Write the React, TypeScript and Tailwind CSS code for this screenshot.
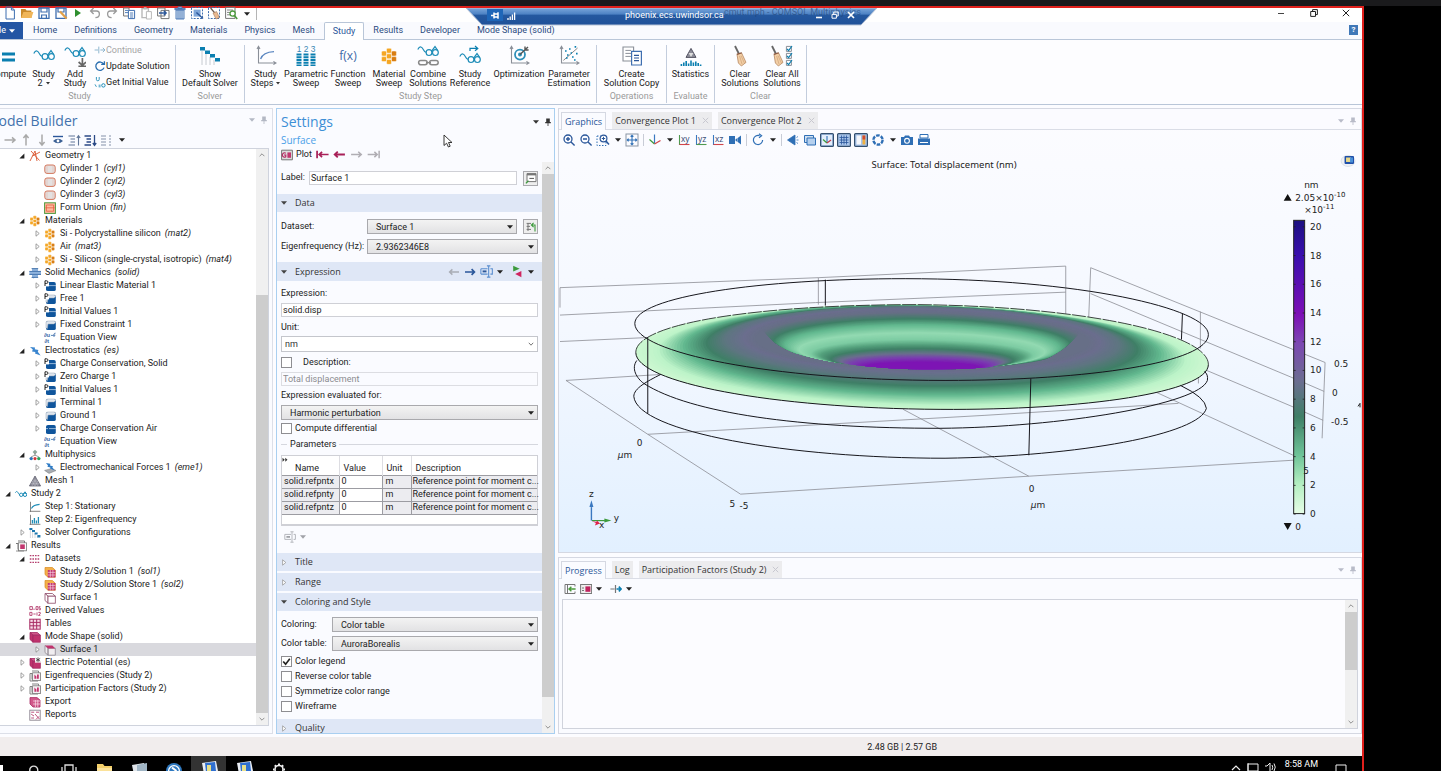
import React, { ReactNode } from "react";

/* ---------- shared bits ---------- */

function Svg({ children, size = 12, vb = 12 }: { children: ReactNode; size?: number; vb?: number }) {
  return (
    <svg width={size} height={size} viewBox={`0 0 ${vb} ${vb}`} fill="none" className="block shrink-0" aria-hidden="true">
      {children}
    </svg>
  );
}

function Caret({ color = "#222" }: { color?: string }) {
  return (
    <svg width="6" height="4" viewBox="0 0 6 4" className="block shrink-0" aria-hidden="true">
      <path d="M0 0.3H6L3 3.7Z" fill={color} />
    </svg>
  );
}

function Pin({ color }: { color: string }) {
  return (
    <Svg size={8} vb={8}>
      <path d="M2.2 0.5H5.8V4H6.8V5.2H1.2V4H2.2ZM3.6 5.2H4.4V8H3.6Z" fill={color} />
    </Svg>
  );
}

function PanelTools({ color }: { color: string }) {
  return (
    <div className="flex items-center gap-1">
      <button aria-label="Panel menu" className="p-px"><Caret color={color} /></button>
      <button aria-label="Pin panel"><Pin color={color} /></button>
    </div>
  );
}

/* ---------- tree icons ---------- */

const hexDots = (s: number) => (
  <g transform={`scale(${s})`}>
    {[[4.2, 0.8], [1, 2.6], [7.4, 2.6], [4.2, 4.4], [1, 6.2], [7.4, 6.2], [4.2, 8]].map(([x, y], i) => (
      <rect key={i} x={x} y={y} width="3.2" height="3.2" rx="0.8" fill={i % 3 === 2 ? "#d97d12" : "#f5a623"} stroke="#fff" strokeWidth="0.3" />
    ))}
  </g>
);

const domain = (top: string, p: boolean, split: boolean) => (
  <>
    <path d="M2 3.5Q2 2 4 2H10Q11.8 2 11.8 4V9.5Q11.8 11 10 11H4Q2 11 2 9.5Z" fill="#0f559c" />
    {top !== "#0f559c" && <path d="M2 3.5Q2 2 4 2H10Q11.6 2 11.6 3.6L10 5H4L3.4 9.5L2 9Z" fill={top} stroke="#9aa7b5" strokeWidth="0.5" />}
    {split && <path d="M2 5.6H4M5 5.6H12" stroke="#cfe0f2" strokeWidth="0.7" />}
    {p && <><rect x="0" y="0" width="5" height="6.4" fill="#fff" /><path d="M1 6V0.8H2.6Q4 0.9 4 2.1Q4 3.4 2.6 3.4H1" stroke="#222" strokeWidth="1" /></>}
  </>
);

const glasses = (c = "#1f8db8") => (
  <g stroke={c} strokeWidth="1">
    <path d="M0.4 4.6C1.6 2.6 2.6 3.6 3.4 5.4Q4 6.6 4.8 6.6" />
    <circle cx="6.2" cy="6.8" r="1.7" />
    <circle cx="10" cy="6.8" r="1.7" />
    <path d="M8 6.2L10 3.8L11.6 6" />
  </g>
);

const plotGroup = (
  <>
    <path d="M3 1H9.5V3M1 3.5H3V9.5H9" stroke="#777" strokeWidth="1" />
    <rect x="3.5" y="2.8" width="8" height="8" fill="#fff" stroke="#777" strokeWidth="0.8" />
    <rect x="5.2" y="4.4" width="4.6" height="4.6" fill="#c2376f" />
    <path d="M1 11H9" stroke="#777" strokeWidth="0.8" />
  </>
);

const cube = (front: string, top: string, line = "#a12a62") => (
  <>
    <path d="M1 1.5H8.4L11.3 4.2H4Z" fill={top} stroke={line} strokeWidth="0.8" />
    <path d="M1 1.5L4 4.2V11.2L1 8.5Z" fill={front} stroke={line} strokeWidth="0.8" />
    <rect x="4" y="4.2" width="7.3" height="7" fill={front} stroke={line} strokeWidth="0.8" />
  </>
);

const treeIcons: Record<string, ReactNode> = {
  geometry: <path d="M1 11L6 1L8 11M2 1L10.5 10.5M3.4 6L11 2" stroke="#d9532c" strokeWidth="0.9" />,
  cylinder: (
    <>
      <rect x="0.8" y="2" width="10.4" height="8.4" rx="2.2" fill="#e4e1e1" stroke="#d0684b" strokeWidth="0.9" />
      <path d="M3 2.2V10.2M9 2.2V10.2" stroke="#e6b2a2" strokeWidth="0.5" />
    </>
  ),
  union: (
    <>
      <rect x="0.6" y="0.8" width="10.8" height="10.6" fill="#ffb9a0" stroke="#4e9a3c" strokeWidth="1" />
      <path d="M2.4 3H9.6V9.2H2.4ZM1.4 5.8H10.6" stroke="#e2613f" strokeWidth="0.8" />
    </>
  ),
  materials: hexDots(1),
  solid: (
    <>
      <path d="M3 1.4H9V4H12V8H9V10.6H6L4.6 11.4L3 10.6V8H0.4V4H3Z" fill="#8fb4de" />
      <path d="M0.4 4.4H12M0.4 7.4H12M2.6 1.6H9.2M2.6 10.4H9.2" stroke="#3f6fa8" strokeWidth="0.9" />
    </>
  ),
  domP: domain("#0f559c", true, true),
  bndP: domain("#dfe6ee", true, false),
  bnd: domain("#dfe6ee", false, false),
  dom: domain("#0f559c", false, true),
  equation: (
    <>
      <g fill="#3465a4" fontFamily="'Liberation Sans', sans-serif" fontSize="5.4" fontWeight="700">
        <text x="0" y="5">∂u</text>
        <text x="0.6" y="11">∂t</text>
      </g>
      <path d="M7 3.4H9M10 5V2.2Q10.2 1 11.6 1.2M9 3.2H11.4" stroke="#3465a4" strokeWidth="0.8" />
    </>
  ),
  bolt: <path d="M1 2L6 2.6L5.8 4.2L9.4 5L8.8 6.8L11.6 10.6L6 8.6L6.4 7L3 6.4L3.8 4.6Z" fill="#3b86cf" />,
  multi: (
    <>
      <path d="M6 0.8L8.4 3L6 5.4L3.6 3Z" fill="#8fa79b" />
      <path d="M6 4V7M2 8L6 6L10 8" stroke="#888" strokeWidth="0.8" />
      <circle cx="2.2" cy="9.6" r="1.7" fill="#2f74b8" />
      <circle cx="6" cy="9.6" r="1.6" fill="#d33a3a" />
      <circle cx="9.8" cy="9.6" r="1.7" fill="#2aa05a" />
    </>
  ),
  emech: (
    <>
      <path d="M0.6 8.4L8 6.4L12 8.6L5 11.4Z" fill="#a9adb3" stroke="#777" strokeWidth="0.5" />
      <path d="M2 1L6.4 1.8L6 3.4L9 4.2L8.4 5.4L10.6 8.4L6 6.6L6.4 5.4L3.4 4.8L4 3.4Z" fill="#2f7cc6" />
    </>
  ),
  mesh: (
    <>
      <path d="M6 1L11.6 11H0.4Z" fill="#8c8c98" stroke="#555564" strokeWidth="0.7" />
      <path d="M3.2 6H8.8M4.6 3.6L9 11M7.4 3.6L3 11M1.8 8.6H10.2M6 11L3.2 6M6 11L8.8 6" stroke="#c9c9d2" strokeWidth="0.4" />
    </>
  ),
  study: glasses(),
  stationary: (
    <>
      <path d="M1.5 0.8V11M0.6 10.3H11.4" stroke="#777" strokeWidth="0.9" />
      <path d="M2.4 7.4Q4.4 3.8 10.6 3.4" stroke="#1f8db8" strokeWidth="1.1" />
    </>
  ),
  eigen: (
    <>
      <path d="M1.5 0.8V11M0.6 10.3H11.4" stroke="#777" strokeWidth="0.9" />
      <path d="M3.4 9.6V6M5.4 9.6V4M7.4 9.6V6.4M9.4 9.6V3" stroke="#1f8db8" strokeWidth="1.3" />
    </>
  ),
  solver: (
    <>
      <path d="M1.4 3V11M3.6 5V11M6 7V11M8.4 9V11" stroke="#c9cdd4" strokeWidth="0.8" />
      <path d="M0.4 1H3.4V3H0.4ZM3 3H6V5H3ZM5.6 5.4H8.6V7.4H5.6ZM8.4 8H11.4V10.6H8.4Z" fill="#1c77ae" />
    </>
  ),
  results: plotGroup,
  plots: (
    <>
      <path d="M3 1H9.5V3M1 3.5H3V9.5M1 3.5V11H9" stroke="#777" strokeWidth="0.9" />
      <rect x="3.6" y="2.8" width="7.8" height="7.8" fill="#f4f0f3" stroke="#777" strokeWidth="0.8" />
      <path d="M5.4 8.8V4.6L7.4 6.6V8.8ZM8 4.4H9.8V8.8H8Z" fill="#c2376f" />
    </>
  ),
  datasets: <path d="M0.8 2.6H10.8M0.8 6H10.8M0.8 9.4H10.8" stroke="#b5406f" strokeWidth="1.4" strokeDasharray="1.6 1" />,
  solution: (
    <>
      <path d="M1 1.5H8.4L11.3 4.2V11.2H4L1 8.5Z" fill="#f3b04a" stroke="#d98a20" strokeWidth="0.7" />
      <rect x="3.8" y="4" width="7.6" height="7.4" fill="#c2376f" />
      <path d="M6.3 4V11.4M8.9 4V11.4M3.8 6.4H11.4M3.8 9H11.4" stroke="#fbe3ec" strokeWidth="0.6" />
    </>
  ),
  surfset: cube("#fff", "#fff", "#8e4a68"),
  derived: (
    <path d="M0.8 1.6H3.4V4.6H0.8ZM5 3.6V5M7 1.6H9V4.6H7ZM11.4 1.6H10.2V3.2H11.4V4.8H10M0.8 7.4H3V10.4H0.8ZM4.4 9H6.6M8 7.4V10.6M9.4 7.4H11.2V9L9.4 10.4H11.4" stroke="#b5406f" strokeWidth="0.9" />
  ),
  tables: (
    <>
      <rect x="0.8" y="1.2" width="10.4" height="10" fill="#f7dbe6" stroke="#a82c64" strokeWidth="1" />
      <path d="M4.3 1.2V11.2M7.7 1.2V11.2M0.8 4.4H11.2M0.8 7.8H11.2" stroke="#a82c64" strokeWidth="1" />
    </>
  ),
  mode: cube("#c0336d", "#d1588a"),
  surface: (
    <>
      <path d="M1 1.5L4 4.2V11.2L1 8.5ZM4 4.2H11.3V11.2H4Z" fill="#f0edf0" stroke="#8d8790" strokeWidth="0.8" />
      <path d="M1 1.5H8.4L11.3 4.4H4Z" fill="#c0336d" />
    </>
  ),
  potential: (
    <>
      {cube("#c0336d", "#d1588a")}
      <rect x="6" y="0" width="6" height="5.6" fill="#fff" />
      <path d="M9 0.4V5.2M6.8 1.4L11.2 4.2M11.2 1.4L6.8 4.2" stroke="#333" strokeWidth="0.8" />
    </>
  ),
  export: (
    <>
      <path d="M1 1.6H8L11 4V11H4L1 8Z" fill="#d1588a" stroke="#a82c64" strokeWidth="0.8" />
      <path d="M4 5H11M4 8H11M6.4 4V11M8.8 4V11" stroke="#fbe3ec" strokeWidth="0.7" />
    </>
  ),
  reports: (
    <>
      <rect x="0.8" y="1.2" width="10.4" height="10" fill="#fff" stroke="#8b8490" strokeWidth="0.9" />
      <path d="M2.2 3.2H5.2M7 3.2H10M2.2 5.2L5 7M6 5L10.4 10M7 10.4L10 7.4M2.2 9H5" stroke="#b5406f" strokeWidth="0.9" />
    </>
  ),
};

type Node = { l: 0 | 1 | 2; a?: "open" | "closed"; i: string; t: string; tag?: string; sel?: boolean };

const nodes: Node[] = [
  { l: 1, a: "open", i: "geometry", t: "Geometry 1" },
  { l: 2, i: "cylinder", t: "Cylinder 1", tag: "(cyl1)" },
  { l: 2, i: "cylinder", t: "Cylinder 2", tag: "(cyl2)" },
  { l: 2, i: "cylinder", t: "Cylinder 3", tag: "(cyl3)" },
  { l: 2, i: "union", t: "Form Union", tag: "(fin)" },
  { l: 1, a: "open", i: "materials", t: "Materials" },
  { l: 2, a: "closed", i: "materials", t: "Si - Polycrystalline silicon", tag: "(mat2)" },
  { l: 2, a: "closed", i: "materials", t: "Air", tag: "(mat3)" },
  { l: 2, a: "closed", i: "materials", t: "Si - Silicon (single-crystal, isotropic)", tag: "(mat4)" },
  { l: 1, a: "open", i: "solid", t: "Solid Mechanics", tag: "(solid)" },
  { l: 2, a: "closed", i: "domP", t: "Linear Elastic Material 1" },
  { l: 2, a: "closed", i: "bndP", t: "Free 1" },
  { l: 2, a: "closed", i: "domP", t: "Initial Values 1" },
  { l: 2, a: "closed", i: "bnd", t: "Fixed Constraint 1" },
  { l: 2, i: "equation", t: "Equation View" },
  { l: 1, a: "open", i: "bolt", t: "Electrostatics", tag: "(es)" },
  { l: 2, a: "closed", i: "domP", t: "Charge Conservation, Solid" },
  { l: 2, a: "closed", i: "bndP", t: "Zero Charge 1" },
  { l: 2, a: "closed", i: "domP", t: "Initial Values 1" },
  { l: 2, a: "closed", i: "bnd", t: "Terminal 1" },
  { l: 2, a: "closed", i: "bnd", t: "Ground 1" },
  { l: 2, a: "closed", i: "dom", t: "Charge Conservation Air" },
  { l: 2, i: "equation", t: "Equation View" },
  { l: 1, a: "open", i: "multi", t: "Multiphysics" },
  { l: 2, a: "closed", i: "emech", t: "Electromechanical Forces 1", tag: "(eme1)" },
  { l: 1, i: "mesh", t: "Mesh 1" },
  { l: 0, a: "open", i: "study", t: "Study 2" },
  { l: 1, i: "stationary", t: "Step 1: Stationary" },
  { l: 1, i: "eigen", t: "Step 2: Eigenfrequency" },
  { l: 1, a: "closed", i: "solver", t: "Solver Configurations" },
  { l: 0, a: "open", i: "results", t: "Results" },
  { l: 1, a: "open", i: "datasets", t: "Datasets" },
  { l: 2, i: "solution", t: "Study 2/Solution 1", tag: "(sol1)" },
  { l: 2, i: "solution", t: "Study 2/Solution Store 1", tag: "(sol2)" },
  { l: 2, i: "surfset", t: "Surface 1" },
  { l: 1, i: "derived", t: "Derived Values" },
  { l: 1, i: "tables", t: "Tables" },
  { l: 1, a: "open", i: "mode", t: "Mode Shape (solid)" },
  { l: 2, a: "closed", i: "surface", t: "Surface 1", sel: true },
  { l: 1, a: "closed", i: "potential", t: "Electric Potential (es)" },
  { l: 1, a: "closed", i: "plots", t: "Eigenfrequencies (Study 2)" },
  { l: 1, a: "closed", i: "plots", t: "Participation Factors (Study 2)" },
  { l: 1, i: "export", t: "Export" },
  { l: 1, i: "reports", t: "Reports" },
];

const indent = ["pl-[2px]", "pl-[16px]", "pl-[31px]"];

function TreeArrow({ a }: { a?: "open" | "closed" }) {
  return (
    <span className="flex w-3 shrink-0 justify-center">
      {a === "open" && <Svg size={6} vb={6}><path d="M5.4 0.6V5.4H0.4Z" fill="#222" /></Svg>}
      {a === "closed" && <Svg size={7} vb={7}><path d="M2 0.8L5.2 3.5L2 6.2Z" stroke="#8a8a8a" strokeWidth="0.8" fill="#fff" /></Svg>}
    </span>
  );
}

function ScrollBar({ thumb }: { thumb: ReactNode }) {
  return (
    <div className="flex w-3 shrink-0 flex-col bg-[#f0f0f0]" aria-hidden="true">
      <span className="flex h-3 items-center justify-center"><Svg size={6} vb={6}><path d="M0.6 4.2L3 1.8L5.4 4.2" stroke="#909090" /></Svg></span>
      <div className="flex min-h-0 flex-1 flex-col">{thumb}</div>
      <span className="flex h-3 items-center justify-center"><Svg size={6} vb={6}><path d="M0.6 1.8L3 4.2L5.4 1.8" stroke="#909090" /></Svg></span>
    </div>
  );
}

/* ---------- title bar ---------- */

const quick: [string, ReactNode][] = [
  ["New", <path d="M3 1H8.4L11.4 4V13H3ZM8.4 1V4H11.4" stroke="#3f6fb0" />],
  ["Open", <><path d="M1 3H5.4L6.6 4.4H11.4V12H1Z" fill="#c98a2c" /><path d="M3.4 6H13.4L11.4 12H1Z" fill="#f0b65a" /></>],
  ["Save", <><path d="M2 2H12V12.4H2Z" stroke="#3f6fb0" strokeWidth="1.3" /><path d="M4 2V6H10V2M4.6 12.4V9H9.4V12.4" stroke="#3f6fb0" strokeWidth="1.2" /></>],
  ["Save as", <><path d="M2 2H12V12.4H2Z" stroke="#3f6fb0" strokeWidth="1.3" /><path d="M4 2V6H10V2" stroke="#3f6fb0" strokeWidth="1.2" /><path d="M6 5.6L12.6 12.6" stroke="#e0a04a" strokeWidth="2.2" /></>],
  ["Run", <path d="M4 3L10 7L4 11Z" fill="#2f8f2f" />],
  ["Undo", <path d="M5.6 2L2.6 5L5.6 8M2.6 5H8.6Q11.4 5 11.4 8Q11.4 11.6 7.4 11.6" stroke="#9a9a9a" strokeWidth="1.3" />],
  ["Redo", <path d="M8.4 2L11.4 5L8.4 8M11.4 5H5.4Q2.6 5 2.6 8Q2.6 11.6 6.6 11.6" stroke="#9a9a9a" strokeWidth="1.3" />],
  ["Copy", <><path d="M1.6 2H7V10H1.6Z" stroke="#777" /><path d="M6.4 4.4H12.6V12.6H6.4Z" fill="#fff" stroke="#3f6fb0" /><path d="M3 4.4H6M3 6.6H6M8 7H11.2M8 9H11.2M8 11H11.2" stroke="#3f6fb0" strokeWidth="0.9" /></>],
  ["Paste", <><path d="M3 2.6H9.4V11.6H3Z" stroke="#b9b9b9" strokeWidth="1.4" /><path d="M7.4 5.6H12.4V13H7.4Z" fill="#fff" stroke="#b9b9b9" /><path d="M4.8 1.2H7.6V3.4H4.8Z" fill="#b9b9b9" /></>],
  ["Duplicate", <><path d="M1.6 2H9V10H1.6ZM5 4.4H13V12.6H5Z" stroke="#777" /><path d="M3 7H10M7.8 4.8L10.2 7L7.8 9.2" stroke="#2b579a" strokeWidth="1.3" /></>],
  ["Delete", <><path d="M3 4H11V13H3ZM1.8 2.4H12.2V3.6H1.8ZM5 1H9V2.4H5Z" fill="#dbe7f6" stroke="#3f6fb0" strokeWidth="0.9" /><path d="M5 4V13M7 4V13M9 4V13" stroke="#3f6fb0" strokeWidth="0.9" /></>],
  ["Select", <><rect x="1.5" y="1.5" width="11" height="11" stroke="#3f6fb0" strokeDasharray="2 1.2" /><rect x="3.6" y="3.6" width="7" height="7" fill="#7fa6d8" /><path d="M6.4 6.4L13 12.6" stroke="#2b579a" strokeWidth="1.4" /></>],
  ["Clear selection", <><rect x="1.5" y="1.5" width="11" height="11" stroke="#3f6fb0" strokeDasharray="2 1.2" /><path d="M3.6 2L10 9.6" stroke="#6a5a50" strokeWidth="1.3" /><path d="M6 7L9.6 5.6L12.4 11.6L9 13Z" fill="#e9b990" stroke="#a5795a" strokeWidth="0.6" /></>],
  ["Find", <><path d="M1.6 1.4H11V12.4H1.6Z" stroke="#777" /><path d="M3 4H9M3 6.4H6M3 8.8H6" stroke="#777" strokeWidth="0.9" /><circle cx="8.6" cy="7.6" r="2.6" stroke="#4b9a3c" strokeWidth="1.3" fill="#fff" /><path d="M10.4 9.6L13.2 13" stroke="#4b9a3c" strokeWidth="1.6" /></>],
];

function TitleBar() {
  return (
    <header className="flex h-[14px] shrink-0 items-start justify-between bg-white">
      <div className="flex items-center gap-[3px] pl-[3px]">
        {quick.map(([n, g]) => (
          <button key={n} aria-label={n} className="-mt-[2px]"><Svg size={14} vb={14}>{g}</Svg></button>
        ))}
        <button aria-label="Customize" className="ml-[2px] px-px"><Caret /></button>
        <span className="ml-[2px] h-3 w-px bg-[#b5b5b5]" />
      </div>
      <div className="flex items-center gap-6 pr-3">
        <button aria-label="Minimize"><Svg size={10} vb={10}><path d="M2 5.5H8" stroke="#444" /></Svg></button>
        <button aria-label="Restore"><Svg size={8} vb={8}><path d="M0.7 2.5H5.5V7.4H0.7ZM2.6 2.5V0.6H7.4V5.6H5.5" stroke="#222" /></Svg></button>
        <button aria-label="Close"><Svg size={8} vb={8}><path d="M0.8 0.8L7.2 7.2M7.2 0.8L0.8 7.2" stroke="#222" /></Svg></button>
      </div>
    </header>
  );
}

function RemoteBar() {
  return (
    <div className="absolute left-[466px] top-0 z-10 h-[18px] w-[411px]">
      <svg viewBox="0 0 411 18" width="411" height="18" className="absolute inset-0" aria-hidden="true">
        <defs>
          <linearGradient id="rdp" x1="0" x2="0" y1="0" y2="1">
            <stop offset="0" stopColor="#7aa6da" />
            <stop offset="0.36" stopColor="#4d82c4" />
            <stop offset="0.42" stopColor="#24589f" />
            <stop offset="1" stopColor="#1f5199" />
          </linearGradient>
        </defs>
        <path d="M0 0H411L395 17H16Z" fill="url(#rdp)" stroke="#b7c3d6" strokeWidth="1" />
      </svg>
      <span className="absolute left-[258px] top-0 whitespace-nowrap text-[9px] leading-[9px] text-[#1f3f70]/60">cmut.mph - COMSOL Multiphysics</span>
      <div className="relative flex h-[14px] items-center pl-[21px] pr-[22px] text-white">
        <button aria-label="Pin connection bar" className="flex h-[12px] w-4 items-center justify-center bg-[#1e66b8]">
          <Svg size={9} vb={9}><path d="M0 4.5H3M3 1.5V7.5M3 3H7V6H3M7 1.2V7.8" stroke="#fff" strokeWidth="1.5" /></Svg>
        </button>
        <span className="ml-1"><Svg size={9} vb={9}><path d="M1 9V7M3.2 9V5.4M5.4 9V3.4M7.6 9V1.4" stroke="#fff" strokeWidth="1.3" /></Svg></span>
        <span className="ml-[109px] pt-[2px] text-[9px]">phoenix.ecs.uwindsor.ca</span>
        <div className="ml-auto flex items-center gap-2">
          <button aria-label="Minimize session"><Svg size={8} vb={8}><path d="M1 6.5H7" stroke="#fff" strokeWidth="1.6" /></Svg></button>
          <button aria-label="Restore session"><Svg size={8} vb={8}><path d="M1 3.4H5.4V7.2H1ZM2.8 3.4V1H7.2V5H5.4" stroke="#fff" /></Svg></button>
          <button aria-label="Close session"><Svg size={8} vb={8}><path d="M1 1L7 7M7 1L1 7" stroke="#fff" strokeWidth="1.7" /></Svg></button>
        </div>
      </div>
    </div>
  );
}

/* ---------- ribbon ---------- */

const menu = ["Home", "Definitions", "Geometry", "Materials", "Physics", "Mesh", "Study", "Results", "Developer", "Mode Shape (solid)"];

function MenuBar() {
  return (
    <nav className="flex h-[18px] shrink-0 items-stretch border-b border-[#b9c6d8] bg-[#f9fafe] text-[9px]">
      <button className="flex w-[23px] items-center justify-end gap-[3px] overflow-hidden bg-[#2456a4] pr-2 text-white">File<Caret color="#fff" /></button>
      <div className="-mb-px ml-[2px] flex gap-px">
        {menu.map((m) =>
          m === "Study" ? (
            <a key={m} href="#study" className="flex items-center rounded-t-xs border border-b-0 border-[#b9c6d8] bg-white px-[8px] text-[#2b579a]">{m}</a>
          ) : (
            <a key={m} href="#tab" className="flex items-center px-[8px] text-[#2b4a80]">{m}</a>
          ),
        )}
      </div>
      <button aria-label="Help" className="ml-auto mr-1 mt-[3px] flex h-[10px] w-[9px] items-center justify-center bg-[#3f78b8] text-[8px] font-bold leading-none text-white">?</button>
    </nav>
  );
}

const axes = <path d="M3.5 2V18H20M2 4L3.5 1.4L5 4M18.4 16.4L21 18L18.4 19.6" stroke="#8a8f98" strokeWidth="1.1" />;
const bigGlasses = (
  <g stroke="#1f8db8" strokeWidth="1.2">
    <path d="M0.8 8.6C3 4 5 6 6.6 9Q7.8 11.6 9.4 11.4" />
    <circle cx="12" cy="11.6" r="2.9" />
    <circle cx="18.4" cy="11.6" r="2.9" />
    <path d="M14.6 10.2L18 5.6L20.8 9.6" />
  </g>
);
const broom = (
  <>
    <path d="M6 1L10 9" stroke="#666" strokeWidth="1.8" />
    <path d="M8 9.4L12.6 8L17 17.4L12.4 21L9.4 18Z" fill="#f3cfa6" stroke="#b58660" strokeWidth="0.8" />
    <path d="M7.8 9.4L12.8 7.8" stroke="#8a5a44" strokeWidth="1.2" />
    <path d="M10.6 11L13 19M12 10.6L15.4 18" stroke="#c79a70" strokeWidth="0.6" />
  </>
);

const ribbonIcons: Record<string, ReactNode> = {
  compute: <path d="M5 9H18M5 15H18" stroke="#0b7fb0" strokeWidth="3" />,
  study: bigGlasses,
  add: <><g transform="translate(0 -3)">{bigGlasses}</g><path d="M18.4 13V20M14.6 17L18.4 20.4L22 17M14.4 21.4H22" stroke="#666" strokeWidth="1.7" /></>,
  solver: (
    <>
      <path d="M3 6V20M7 9V20M11 12V20M15 15V20" stroke="#c6cad0" strokeWidth="1" />
      <path d="M1 2H6V5.6H1ZM6 5.4H11V9H6ZM11 9H16V12.4H11ZM16 13H21V16.4H16Z" fill="#0b7fb0" />
    </>
  ),
  steps: <>{axes}<path d="M5.6 14Q8 7 19 6.6" stroke="#5a86c0" strokeWidth="1.3" /></>,
  param: (
    <>
      <g fill="#3a87b4" fontFamily="'Liberation Sans', sans-serif" fontSize="8.4" textAnchor="middle">
        <text x="4" y="7">1</text><text x="11" y="7">2</text><text x="18" y="7">3</text>
      </g>
      <path d="M4 8.6V21M11 8.6V21M18 8.6V21" stroke="#0b7fb0" strokeWidth="5" strokeDasharray="2 0.7" />
    </>
  ),
  fx: <text x="11" y="15" fill="#3f6aa8" fontFamily="'Open Sans', sans-serif" fontSize="12" textAnchor="middle">f(x)</text>,
  material: <g transform="translate(2 2)">{hexDots(1.55)}</g>,
  combine: <><g transform="translate(0 -4)">{bigGlasses}</g><path d="M9 17.6H14" stroke="#888" strokeWidth="1.4" /><rect x="1.6" y="15.4" width="8.6" height="4.4" rx="2.2" stroke="#888" strokeWidth="1.5" /><rect x="12.6" y="15.4" width="8.6" height="4.4" rx="2.2" stroke="#888" strokeWidth="1.5" /></>,
  ref: <><g transform="translate(0 3)">{bigGlasses}</g><path d="M11 6V3.4H18.6M16 1L18.8 3.4L16 5.8" stroke="#0b7fb0" strokeWidth="1.2" /></>,
  optim: <>{axes}<circle cx="12" cy="9.6" r="5" stroke="#2e8fb8" strokeWidth="1.8" /><circle cx="12" cy="9.6" r="2" fill="#2e8fb8" /><path d="M12 9.6L20 2M17 1.6V5H20.6" stroke="#555" strokeWidth="1.4" /></>,
  estim: <>{axes}<path d="M5.4 15.4L19.6 3" stroke="#888" /><path d="M7 6H8.6M11 4H12.6M16.6 1.8H18.2M9 10H10.6M14 12H15.6M18 8.6H19.6M8 13H9.6M16 15H17.6M12.6 8H14" stroke="#0b7fb0" strokeWidth="1.7" /></>,
  copy: <><path d="M2 2H12.6V16H2Z" fill="#fff" stroke="#8a8f98" strokeWidth="1.1" /><path d="M4.4 5.4H10M4.4 8.4H10M4.4 11.4H10" stroke="#8a8f98" /><path d="M10.6 6.4H20.4V20H10.6Z" fill="#fff" stroke="#3f6fb0" strokeWidth="1.2" /><path d="M13 10.4H18M13 13H18M13 15.6H18" stroke="#2b579a" strokeWidth="1.1" /></>,
  stats: (
    <>
      <path d="M11 3.4L16 12.4H6Z" fill="#8c8c98" stroke="#555564" />
      <path d="M11 12L8.6 8H13.4Z" fill="#ddd" />
      <path d="M1.4 21V19M3.8 21V17.6M6.2 21V16M8.6 21V18.4M11 21V15.4M13.4 21V17.4M15.8 21V16.4M18.2 21V18M20.6 21V19.4" stroke="#0b7fb0" strokeWidth="1.6" />
    </>
  ),
  clear: broom,
  clearAll: (
    <>
      <g transform="translate(-5 0)">{broom}</g>
      <path d="M15.4 1.4H20.4V6.4H15.4ZM15.4 8.4H20.4V13.4H15.4ZM15.4 15.4H20.4V20.4H15.4Z" stroke="#8a8f98" />
      <path d="M16 4L17.6 5.6L21 1M16 11L17.6 12.6L21 8M16 18L17.6 19.6L21 15" stroke="#0b7fb0" strokeWidth="1.2" />
    </>
  ),
};

function Big({ icon, a, b, w, drop }: { icon: string; a: string; b?: string; w: string; drop?: boolean }) {
  return (
    <button className={`flex shrink-0 flex-col items-center whitespace-nowrap text-[9px] leading-[9px] ${w}`}>
      <span className="mb-[3px]"><Svg size={22} vb={22}>{ribbonIcons[icon]}</Svg></span>
      <span>{a}</span>
      {b && <span className="flex items-center gap-[3px]">{b}{drop && <svg width="4" height="3" viewBox="0 0 4 3" aria-hidden="true"><path d="M0 0H4L2 2.6Z" fill="#333" /></svg>}</span>}
    </button>
  );
}

function Group({ label, children, w }: { label: string; children: ReactNode; w: string }) {
  return (
    <section className={`mb-px mt-[5px] flex shrink-0 flex-col border-r border-[#c3cddd] ${w}`}>
      <div className="flex flex-1 items-start">{children}</div>
      <div className="text-center text-[9px] leading-[13px] text-[#9a9a9a]">{label}</div>
    </section>
  );
}

function Ribbon() {
  return (
    <div className="flex h-[65px] shrink-0 border-b border-[#b9c6d8] bg-[#fdfdff] text-[#222]">
      <Group label="Study" w="w-[176px] pr-4">
        <div className="-ml-3 shrink-0"><Big icon="compute" a="Compute" w="w-[40px]" /></div>
        <Big icon="study" a="Study" b="2" drop w="w-[31px]" />
        <Big icon="add" a="Add" b="Study" w="w-[32px]" />
        <div className="-mt-px flex flex-col gap-1 pl-[3px] text-[9px] leading-[12px]">
          <button disabled className="flex items-center whitespace-nowrap text-[#a5a5a5]">
            <Svg><path d="M0.6 6H4M4.8 2.6V9.4M6.4 6H11M8.8 3.8L11 6L8.8 8.2" stroke="#8fb7cf" /></Svg>Continue
          </button>
          <button className="flex items-center whitespace-nowrap">
            <Svg><path d="M9.6 4A4.2 4.2 0 1 0 10 7.6M10.4 1.2V4.4H7.2" stroke="#2b6fb0" strokeWidth="1.3" /></Svg>Update Solution
          </button>
          <button className="flex items-center whitespace-nowrap">
            <Svg><path d="M2.4 1V3.4Q2.4 4.8 3.8 4.8T5.2 3.4V1M1 8.4L2.4 10.8M4.6 9.2H6.6M4.6 10.8H6.6" stroke="#1f8db8" strokeWidth="0.9" /><circle cx="9.4" cy="9.4" r="1.7" stroke="#1f8db8" /></Svg>Get Initial Value
          </button>
        </div>
      </Group>
      <Group label="Solver" w="w-[69px]"><Big icon="solver" a="Show" b="Default Solver" w="w-[68px]" /></Group>
      <Group label="Study Step" w="w-[352px]">
        <Big icon="steps" a="Study" b="Steps" drop w="w-[41px]" />
        <Big icon="param" a="Parametric" b="Sweep" w="w-[40px]" />
        <Big icon="fx" a="Function" b="Sweep" w="w-[44px]" />
        <Big icon="material" a="Material" b="Sweep" w="w-[38px]" />
        <Big icon="combine" a="Combine" b="Solutions" w="w-[40px]" />
        <Big icon="ref" a="Study" b="Reference" w="w-[44px]" />
        <Big icon="optim" a="Optimization" w="w-[54px]" />
        <Big icon="estim" a="Parameter" b="Estimation" w="w-[46px]" />
      </Group>
      <Group label="Operations" w="w-[70px]"><Big icon="copy" a="Create" b="Solution Copy" w="w-[69px]" /></Group>
      <Group label="Evaluate" w="w-[48px]"><Big icon="stats" a="Statistics" w="w-[47px]" /></Group>
      <Group label="Clear" w="w-[92px]">
        <Big icon="clear" a="Clear" b="Solutions" w="w-[50px]" />
        <Big icon="clearAll" a="Clear All" b="Solutions" w="w-[34px]" />
      </Group>
    </div>
  );
}

/* ---------- model builder ---------- */

const treeTools: [string, ReactNode][] = [
  ["Next", <path d="M1.5 7H12M9 4.4L12 7L9 9.6" stroke="#a9a9a9" strokeWidth="1.5" />],
  ["Move up", <path d="M7 12.5V2M4.4 5L7 2L9.6 5" stroke="#a9a9a9" strokeWidth="1.5" />],
  ["Move down", <path d="M7 1.5V12M4.4 9L7 12L9.6 9" stroke="#a9a9a9" strokeWidth="1.5" />],
  ["Show", <><path d="M2 3.5H12" stroke="#2b579a" strokeWidth="1.4" /><path d="M2 8Q7 3.4 12 8Q7 12.4 2 8Z" fill="#3a5f94" /><circle cx="7" cy="8" r="1.4" fill="#fff" /></>],
  ["Collapse all", <path d="M1.5 3H8M3.5 6H8M3.5 9H8M1.5 12H8M11.5 12.5V3M9.8 5L11.5 2.6L13.2 5" stroke="#5f7597" strokeWidth="1.1" />],
  ["Expand all", <path d="M1.5 3H8M3.5 6H8M3.5 9H8M1.5 12H8M11.5 2V11.6M9.8 10L11.5 12.4L13.2 10" stroke="#2b4a86" strokeWidth="1.3" />],
  ["Columns", <path d="M2 3H7M2 6H7M2 9H7M2 12H7M10 3H12M10 6H12M10 9H12M10 12H12" stroke="#8492aa" strokeWidth="1.2" />],
];

function ModelBuilder() {
  return (
    <aside className="flex w-[273px] shrink-0 flex-col border border-l-0 border-[#dcdfe8] bg-[#fafbff] pb-[7px]">
      <div className="flex h-[22px] items-center justify-between pr-1">
        <h2 className="-ml-[14px] whitespace-nowrap font-['Open_Sans'] text-[14px] text-[#4272ad]">Model Builder</h2>
        <PanelTools color="#b3b8c4" />
      </div>
      <div className="flex h-[17px] items-center gap-[2px] pl-[3px]">
        {treeTools.map(([n, g]) => (
          <button key={n} aria-label={n}><Svg size={14} vb={14}>{g}</Svg></button>
        ))}
        <button aria-label="More" className="ml-1"><Caret /></button>
      </div>
      <div className="mr-[3px] flex min-h-0 flex-1 border border-l-0 border-[#cfd3dd] bg-white">
        <ul className="min-w-0 flex-1 overflow-hidden text-[9px] leading-[13px] text-[#222]">
          {nodes.map((n, k) => (
            <li key={k} className={`flex h-[13px] items-center whitespace-nowrap ${indent[n.l]} ${n.sel ? "bg-[#d9d9de]" : ""}`}>
              <TreeArrow a={n.a} />
              <span className="ml-px mr-1"><Svg>{treeIcons[n.i]}</Svg></span>
              {n.t}
              {n.tag && <i className="ml-1">{n.tag}</i>}
            </li>
          ))}
        </ul>
        <ScrollBar thumb={<><div className="flex-[134]" /><div className="flex-[420] bg-[#cdcdcd]" /></>} />
      </div>
    </aside>
  );
}

/* ---------- settings ---------- */

function Select({ id, value, combo, w = "w-full" }: { id: string; value: string; combo?: boolean; w?: string }) {
  return (
    <div className={`relative flex items-center ${w}`}>
      <select
        id={id}
        defaultValue={value}
        className={
          combo
            ? "h-4 w-full appearance-none border border-[#c4c6cc] bg-white px-[3px] text-[9px] leading-[12px] text-[#333]"
            : "h-[15px] w-full appearance-none border border-[#a9a9ad] bg-linear-to-b from-[#f3f3f3] to-[#e2e2e4] px-2 text-[9px] leading-[12px] text-[#222]"
        }
      >
        <option>{value}</option>
      </select>
      <span className="pointer-events-none absolute right-1">
        {combo ? <Svg size={6} vb={6}><path d="M0.8 1.8L3 4.2L5.2 1.8" stroke="#777" /></Svg> : <Caret />}
      </span>
    </div>
  );
}

function Section({ title, open, children, h = "h-[18px]" }: { title: string; open?: boolean; children?: ReactNode; h?: string }) {
  return (
    <h3 className={`flex shrink-0 items-center bg-[#dfe7f6] pl-1 pr-2 font-['Open_Sans'] text-[9px] text-[#333] ${h}`}>
      <button className="flex items-center">
        <span className="flex w-[14px]">
          {open ? <Caret color="#444" /> : <Svg size={7} vb={7}><path d="M1.6 0.8L4.8 3.5L1.6 6.2Z" stroke="#999" strokeWidth="0.8" fill="#fff" /></Svg>}
        </span>
        {title}
      </button>
      {children}
    </h3>
  );
}

function Check({ id, label, on, wide }: { id: string; label: string; on?: boolean; wide?: boolean }) {
  return (
    <div className={`flex h-[15px] items-center ${wide ? "gap-[11px]" : "gap-[3px]"}`}>
      <span className="relative flex">
        <input id={id} type="checkbox" defaultChecked={on} className="peer h-[11px] w-[11px] appearance-none border border-[#8e8e92] bg-white" />
        <svg viewBox="0 0 10 10" width="11" height="11" className="pointer-events-none absolute inset-0 hidden peer-checked:block" aria-hidden="true">
          <path d="M2 5L4.2 7.4L8 2.6" stroke="#222" strokeWidth="1.5" fill="none" />
        </svg>
      </span>
      <label htmlFor={id}>{label}</label>
    </div>
  );
}

const params = ["solid.refpntx", "solid.refpnty", "solid.refpntz"];

function Settings() {
  return (
    <section className="flex w-[279px] shrink-0 flex-col overflow-hidden border border-[#a9cff0] bg-[#fafbff] text-[9px] text-[#222]">
      <div className="flex h-[25px] shrink-0 items-center justify-between pl-1 pr-[2px]">
        <h2 className="font-['Open_Sans'] text-[14px] text-[#3d8fd6]">Settings</h2>
        <PanelTools color="#333" />
      </div>
      <div className="h-[13px] shrink-0 pl-1 font-['Open_Sans'] text-[10px] leading-[13px] text-[#4aa0e8]">Surface</div>
      <div className="flex h-[15px] shrink-0 items-center gap-1 pl-1">
        <button className="flex items-center gap-[3px] whitespace-nowrap">
          <Svg size={12}><path d="M0.6 1.2H11.4V10.8H0.6Z" fill="#ddd" stroke="#777" /><path d="M4.8 4.2A2.2 2.2 0 1 0 4.8 7.8V6H3" stroke="#b5245f" strokeWidth="1.1" /><path d="M6.4 3.4H10V8.8H6.4Z" fill="#c2376f" /></Svg>
          Plot
        </button>
        <button aria-label="First"><Svg size={13}><path d="M1 2.6V9.4M3 6H11.6M5.6 3.6L3 6L5.6 8.4" stroke="#a82058" strokeWidth="1.6" /></Svg></button>
        <button aria-label="Previous"><Svg size={13}><path d="M1.4 6H11M4.4 3.4L1.6 6L4.4 8.6" stroke="#a82058" strokeWidth="1.7" /></Svg></button>
        <button aria-label="Next"><Svg size={13}><path d="M1 6H10.6M7.6 3.4L10.4 6L7.6 8.6" stroke="#b0aeb4" strokeWidth="1.4" /></Svg></button>
        <button aria-label="Last"><Svg size={13}><path d="M0.6 6H9.4M6.8 3.6L9.4 6L6.8 8.4M11.2 2.6V9.4" stroke="#b0aeb4" strokeWidth="1.4" /></Svg></button>
      </div>
      <div className="flex min-h-0 flex-1">
        <div className="flex min-w-0 flex-1 flex-col overflow-hidden">
          <div className="flex h-[32px] shrink-0 items-center gap-[6px] pl-1 pr-1">
            <label htmlFor="lbl" className="w-[22px]">Label:</label>
            <input id="lbl" defaultValue="Surface 1" className="h-[14px] min-w-0 flex-1 border border-[#cfd0d6] bg-white px-px text-[9px]" />
            <button aria-label="Comments" className="flex h-[15px] w-[15px] items-center justify-center border border-[#a9a9ad] bg-[#eee]"><Svg size={12}><path d="M2 1.6H11V9.6H2Z" fill="#fff" stroke="#777" /><path d="M2 2.6H11" stroke="#777" strokeWidth="1.6" /><path d="M4.4 6.4H9" stroke="#555" /><path d="M1 11.4L3.4 8.6" stroke="#3c9a3c" strokeWidth="1.4" /></Svg></button>
          </div>
          <Section title="Data" open />
          <div className="flex shrink-0 flex-col gap-[5px] pb-[8px] pl-1 pr-1 pt-[7px]">
            <div className="flex items-center">
              <label htmlFor="ds" className="w-[86px]">Dataset:</label>
              <div className="flex flex-1 items-center gap-[6px]">
                <Select id="ds" value="Surface 1" w="flex-1" />
                <button aria-label="Go to source" className="flex h-[15px] w-[15px] items-center justify-center border border-[#a9a9ad] bg-[#eee]"><Svg size={12}><path d="M1.6 2.4H6M1.6 5.4H5M1.6 8.4H6M3 2.4V10" stroke="#777" /><path d="M10 10.4V4H6.6M8.6 1.8L6.4 4L8.6 6.2" stroke="#3c9a3c" strokeWidth="1.1" /></Svg></button>
              </div>
            </div>
            <div className="flex items-center">
              <label htmlFor="ef" className="w-[86px] whitespace-nowrap">Eigenfrequency (Hz):</label>
              <Select id="ef" value="2.9362346E8" w="flex-1" />
            </div>
          </div>
          <Section title="Expression" open h="h-[19px]">
            <span className="ml-auto flex items-center gap-1">
              <button aria-label="Back"><Svg><path d="M1.4 6H11M4.4 3.4L1.6 6L4.4 8.6" stroke="#a9adb5" strokeWidth="1.5" /></Svg></button>
              <button aria-label="Forward"><Svg><path d="M1 6H10.6M7.6 3.2L10.4 6L7.6 8.8" stroke="#2b579a" strokeWidth="1.7" /></Svg></button>
              <button aria-label="Insert expression"><Svg size={13}><path d="M0.8 3.4H7M0.8 8.4H7M0.8 3.4V8.4M9.6 3.4H11.4V8.4H9.6M6.4 0.8H9.6M8 0.8V11.2M6.4 11.2H9.6" stroke="#5b8fd0" /><path d="M2.4 5.9H6" stroke="#2b579a" strokeWidth="1.8" /></Svg></button>
              <button aria-label="Insert menu"><Caret /></button>
              <button aria-label="Replace expression" className="ml-1"><Svg size={13}><path d="M2 0.8L8 3.4L2 6Z" fill="#3c9a3c" /><path d="M9.6 5.6V11.2L3.8 8.4Z" fill="#d0245f" /></Svg></button>
              <button aria-label="Replace menu"><Caret /></button>
            </span>
          </Section>
          <div className="flex shrink-0 flex-col pb-[10px] pl-1 pr-1 pt-[5px]">
            <label htmlFor="ex" className="leading-[14px]">Expression:</label>
            <input id="ex" defaultValue="solid.disp" className="mt-[3px] h-[14px] border border-[#cfd0d6] bg-white px-px text-[9px]" />
            <label htmlFor="un" className="mt-[3px] leading-[14px]">Unit:</label>
            <div className="mb-[3px] mt-[2px]"><Select id="un" value="nm" combo /></div>
            <Check id="de" label="Description:" wide />
            <input aria-label="Description" disabled defaultValue="Total displacement" className="mt-[2px] h-[14px] border border-[#dcdde2] bg-[#fafbff] px-px text-[9px] text-[#8b8b8f]" />
            <label htmlFor="ev" className="mt-[3px] leading-[13px]">Expression evaluated for:</label>
            <div className="mb-px mt-[3px]"><Select id="ev" value="Harmonic perturbation" /></div>
            <Check id="cd" label="Compute differential" />
            <fieldset className="mt-px min-w-0">
              <legend className="flex w-full items-center gap-[3px] leading-[14px]">
                <span className="h-px w-[6px] bg-[#d5d7de]" />Parameters<span className="h-px flex-1 bg-[#d5d7de]" />
              </legend>
              <div className="mt-1 h-[71px] border border-b-2 border-[#cfd0d6] bg-white">
                <table className="w-full table-fixed border-collapse text-left leading-[11px]">
                  <colgroup><col className="w-[57px]" /><col className="w-[43px]" /><col className="w-[29px]" /><col /></colgroup>
                  <thead>
                    <tr className="h-[19px] align-bottom">
                      <th className="border-r border-[#dddde2] pb-px font-normal">
                        <Svg size={6} vb={7}><path d="M0.6 1L3.2 3.2L0.6 5.4ZM3.8 1L6.4 3.2L3.8 5.4Z" fill="#333" /></Svg>
                        <span className="block pl-[13px]">Name</span>
                      </th>
                      <th className="border-r border-[#dddde2] pb-px pl-1 font-normal">Value</th>
                      <th className="border-r border-[#dddde2] pb-px pl-1 font-normal">Unit</th>
                      <th className="pb-px pl-1 font-normal">Description</th>
                    </tr>
                  </thead>
                  <tbody>
                    {params.map((p) => (
                      <tr key={p} className="h-[13px] border-y border-[#9c9ca2]">
                        <td className="border-r border-[#9c9ca2] bg-[#ececf0] pl-[2px]">{p}</td>
                        <td className="border-r border-[#9c9ca2] pl-[2px]">0</td>
                        <td className="border-r border-[#9c9ca2] bg-[#ececf0] pl-[3px]">m</td>
                        <td className="whitespace-nowrap bg-[#ececf0] pl-px">Reference point for moment c...</td>
                      </tr>
                    ))}
                  </tbody>
                </table>
              </div>
            </fieldset>
            <div className="mt-[5px] flex items-center gap-1 pl-[3px]">
              <button aria-label="Insert"><Svg size={12}><path d="M0.8 3.4H7M0.8 8.4H7M0.8 3.4V8.4M9.6 3.4H11.4V8.4H9.6M6.4 0.8H9.6M8 0.8V11.2M6.4 11.2H9.6" stroke="#b5b7bd" /><path d="M2.4 5.9H6" stroke="#a0a2a8" strokeWidth="1.8" /></Svg></button>
              <button aria-label="Insert menu"><Caret color="#a0a2a8" /></button>
            </div>
          </div>
          <div className="flex shrink-0 flex-col gap-[2px]">
            <Section title="Title" />
            <Section title="Range" />
            <Section title="Coloring and Style" open />
          </div>
          <div className="flex shrink-0 flex-col gap-1 pb-[5px] pl-1 pr-1 pt-[6px]">
            <div className="flex items-center"><label htmlFor="co" className="w-[51px]">Coloring:</label><Select id="co" value="Color table" w="flex-1" /></div>
            <div className="flex items-center"><label htmlFor="ct" className="w-[51px] whitespace-nowrap">Color table:</label><Select id="ct" value="AuroraBorealis" w="flex-1" /></div>
            <div className="-mt-px">
              <Check id="c1" label="Color legend" on />
              <Check id="c2" label="Reverse color table" />
              <Check id="c3" label="Symmetrize color range" />
              <Check id="c4" label="Wireframe" />
            </div>
          </div>
          <Section title="Quality" />
        </div>
        <ScrollBar thumb={<><div className="flex-[522] bg-[#cdcdcd]" /><div className="flex-[24]" /></>} />
      </div>
    </section>
  );
}

/* ---------- graphics ---------- */

// centre y, rx, ry, red, green, blue, 1 when the ring lies inside the central bowl
type Ring = [number, number, number, number, number, number, number];

const rings: Ring[] = [
  [357, 300, 55, 214, 250, 214, 0],
  [355, 266, 50, 188, 243, 200, 0],
  [350, 240, 45, 98, 184, 143, 0],
  [346, 217, 40, 63, 127, 102, 0],
  [342, 199, 36, 93, 118, 128, 0],
  [340, 180, 32, 107, 110, 142, 0],
  [340, 166, 28, 103, 111, 134, 0],
  [343, 150, 25, 63, 127, 102, 1],
  [346, 138, 22, 98, 184, 143, 1],
  [350, 124, 18, 147, 218, 178, 1],
  [354, 112, 15, 124, 203, 162, 1],
  [356, 102, 12, 84, 160, 124, 1],
  [359, 92, 11, 63, 127, 102, 1],
  [361, 82, 8, 107, 110, 142, 1],
  [364, 72, 7, 122, 63, 176, 1],
  [367, 56, 5, 125, 15, 180, 1],
];

function ringShapes(bowl: number) {
  const out: ReactNode[] = [];
  const n = 9;
  for (let i = 0; i < rings.length - 1; i++) {
    const p = rings[i];
    const q = rings[i + 1];
    if ((q[6] === 1 ? 1 : 0) !== bowl) continue;
    for (let k = 0; k < n; k++) {
      const t = k / n;
      const m = (j: number) => p[j] + (q[j] - p[j]) * t;
      out.push(
        <ellipse key={`${i}-${k}`} cx="922" cy={m(0)} rx={m(1)} ry={m(2)} fill={`rgb(${Math.round(m(3))},${Math.round(m(4))},${Math.round(m(5))})`} transform={`rotate(${1.1 * Math.min(1, m(1) / 250)} 922 ${m(0)})`} />,
      );
    }
  }
  return out;
}

const surfacePath = "M635 352C635 322 760 304 918 304C1090 306 1209 334 1209 364C1209 392 1085 410 940 409C770 408 635 382 635 352Z";

function Plot() {
  const ticks = [0, 2, 4, 6, 8, 10, 12, 14, 16, 18, 20];
  return (
    <svg viewBox="559 149 802 403" className="block h-full w-full" role="img" aria-label="Surface: Total displacement (nm)">
      <defs>
        <clipPath id="surf"><path d={surfacePath} /></clipPath>
        <clipPath id="bowl"><path d="M740 300L766 334C774 344 788 351 800 354C830 363 880 369 931 369C990 369 1030 363 1045 359C1062 351 1072 342 1078 334L1110 300Z" /></clipPath>
        <linearGradient id="legend" x1="0" x2="0" y1="0" y2="1">
          <stop offset="0" stopColor="#1c1080" />
          <stop offset="0.12" stopColor="#3a0fae" />
          <stop offset="0.32" stopColor="#7d0fb6" />
          <stop offset="0.42" stopColor="#7c48b2" />
          <stop offset="0.55" stopColor="#6b6e90" />
          <stop offset="0.67" stopColor="#3f7f66" />
          <stop offset="0.8" stopColor="#6ec398" />
          <stop offset="0.9" stopColor="#b4efc2" />
          <stop offset="1" stopColor="#e6fde6" />
        </linearGradient>
      </defs>
      <g stroke="#8b8d94" strokeWidth="0.8" fill="none">
        <path d="M559 287L818 277L1066 265.4V316M559 314.5L815 302L1066 291.5M559 341L647 337M559 287V307M818 277V304" />
        <path d="M1089 318L1091 267L1294 349L1326 362L1323 438M1091 293L1295 378L1325 391M1205 369L1295 407L1324 420" />
        <path d="M1201 311V348M1199 368V383" />
        <path d="M660 374L565 380L647 434L740 494L1029 476L1294 460M1157 392L1294 455M647 434L985 415L1179 403M903 409L1029 476" />
      </g>
      <g clipPath="url(#surf)">
        <rect x="630" y="300" width="585" height="112" fill="#d6fad6" />
        {ringShapes(0)}
        <g clipPath="url(#bowl)">{ringShapes(1)}</g>
      </g>
      <g stroke="#16161c" strokeWidth="1" fill="none">
        <path d="M634 323C634 296 760 278 905 278C1080 278 1209 308 1209 334C1209 362 1090 380 945 380C770 380 634 352 634 323Z" />
        <path d="M825 279V305M1183 313L1182 339M647 337V413M1031 378L1029 455" />
        <path d="M1209 364C1209 392 1085 410 940 409C770 408 635 382 635 352" />
        <path d="M635 352C635 322 760 304 918 304C1090 306 1209 334 1209 364" strokeDasharray="14 1.5" strokeWidth="0.8" />
        <path d="M636 360C630 368 636 378 643 383C690 413 800 428 940 428C1060 427 1200 404 1208 380Q1209 374 1205 371" />
        <path d="M660 374C646 381 633 388 633 396C636 432 790 458 945 458C1080 456 1200 434 1207 408Q1206 397 1181 385" />
      </g>
      <rect x="1294.5" y="219.5" width="11" height="294" fill="url(#legend)" stroke="#222" />
      <g stroke="#222" strokeWidth="0.8">
        {ticks.map((t) => <path key={t} d={`M1294.5 ${514 - t * 14.4}h2M1303.5 ${514 - t * 14.4}h2`} />)}
      </g>
      <g fill="#222" fontFamily="'DejaVu Sans', sans-serif" fontSize="9">
        {ticks.map((t) => <text key={t} x="1311" y={517 - t * 14.4}>{t}</text>)}
        <text x="944" y="167" textAnchor="middle" fontFamily="'Noto Sans', sans-serif" fontSize="9.5">Surface: Total displacement (nm)</text>
        <text x="1305" y="187">nm</text>
        <path d="M1284.5 200L1288.5 193L1292.5 200Z M1284.5 523L1288.5 530L1292.5 523Z" fill="#111" />
        <text x="1296" y="200">2.05×10<tspan fontSize="7" dy="-4">-10</tspan></text>
        <text x="1305" y="212">×10<tspan fontSize="7" dy="-4">-11</tspan></text>
        <text x="1296" y="530">0</text>
        <text x="1335" y="367">0.5</text>
        <text x="1333" y="396">0</text>
        <text x="1332" y="425">-0.5</text>
        <text x="1304" y="474">5</text>
        <text x="1029" y="492">0</text>
        <text x="1031" y="508"><tspan fontStyle="italic">μ</tspan>m</text>
        <text x="636" y="446">0</text>
        <text x="617" y="458"><tspan fontStyle="italic">μ</tspan>m</text>
        <text x="729" y="507">5</text>
        <text x="739" y="509">-5</text>
        <text x="588" y="497">z</text>
        <text x="613" y="521">y</text>
        <text x="598" y="528">x</text>
      </g>
      <path d="M590.5 520.5V507" stroke="#3a78c0" strokeWidth="1.4" />
      <path d="M590.5 500L588.5 507H592.5Z" fill="#3a78c0" />
      <path d="M591 520.5H604" stroke="#3c9a3c" strokeWidth="1.2" />
      <path d="M610.5 520.5L603.5 518.5V522.5Z" fill="#3c9a3c" />
      <path d="M591 521L595 523L594 525.5L599 523.5L596 520.5L595.5 522" fill="#e0204a" />
      <path d="M1359 406L1361 403V407" stroke="#222" fill="none" />
      <ellipse cx="1349" cy="160" rx="7" ry="5.5" fill="#eef1f6" stroke="#ccd3de" strokeWidth="0.6" />
      <rect x="1345.5" y="155" width="9.5" height="8" rx="1" fill="#1f4fa8" />
      <rect x="1347" y="156.5" width="5" height="4.5" fill="#e8d88a" />
      <rect x="1351" y="156.5" width="3" height="5" fill="#4a90d8" />
    </svg>
  );
}

const B = "#2f6fb5";
const planeIcon = (t: string, v: string, h: string) => (
  <>
    <path d="M2.5 2V12" stroke={v} strokeWidth="1.1" />
    <path d="M2.5 11.5H12.5" stroke={h} strokeWidth="1.1" />
    <text x="4" y="8.5" fontSize="8.5" fill="#3b4f78" fontFamily="'Liberation Sans', sans-serif">{t}</text>
  </>
);
const pressed = (c: ReactNode) => (<><rect x="0.6" y="0.6" width="12.8" height="12.8" rx="1" fill="#a9c5ea" stroke="#35506f" strokeWidth="1.2" />{c}</>);

const gfx: [string, ReactNode][] = [
  ["Zoom in", <><circle cx="6" cy="6" r="4" stroke="#2b579a" strokeWidth="1.3" /><path d="M9 9L12.6 12.6M4 6H8M6 4V8" stroke="#2b579a" strokeWidth="1.4" /></>],
  ["Zoom out", <><circle cx="6" cy="6" r="4" stroke="#2b579a" strokeWidth="1.3" /><path d="M9 9L12.6 12.6M4 6H8" stroke="#2b579a" strokeWidth="1.4" /></>],
  ["Zoom box", <><rect x="1" y="3" width="9" height="9.5" stroke={B} strokeDasharray="1.5 1.5" /><circle cx="7.5" cy="5.5" r="3.4" stroke="#2b579a" strokeWidth="1.2" fill="#fff" /><path d="M10 8L13 11.6" stroke="#2b579a" strokeWidth="1.5" /><path d="M5.8 5.5H9.2M7.5 3.8V7.2" stroke="#2b579a" /></>],
  ["caret", null],
  ["Zoom extents", <><rect x="1" y="1" width="12" height="12" stroke="#8a95a5" /><path d="M7 2V12M2 7H12M5.6 3.6L7 2.2L8.4 3.6M5.6 10.4L7 11.8L8.4 10.4M3.6 5.6L2.2 7L3.6 8.4M10.4 5.6L11.8 7L10.4 8.4" stroke={B} strokeWidth="1.1" /></>],
  ["sep", null],
  ["Default view", <><path d="M6.5 10.5V1.5" stroke="#3a78c0" strokeWidth="1.2" /><path d="M6.5 11L1.5 6.5" stroke="#3c9a3c" strokeWidth="1.2" /><path d="M6.5 11L12.5 7.5" stroke="#d0454a" strokeWidth="1.3" /></>],
  ["caret", null],
  ["XY view", planeIcon("xy", "#4f9a4f", "#d0454a")],
  ["YZ view", planeIcon("yz", "#3a78c0", "#4f9a4f")],
  ["XZ view", planeIcon("xz", "#3a78c0", "#d0454a")],
  ["Camera", <path d="M1 3H7V11H1ZM7.6 6L9 5.4V8.6L7.6 8ZM13 2.5V11.5L9.4 8.8V5.2Z" fill={B} />],
  ["sep", null],
  ["Rotate", <path d="M8.5 2.6A4.6 4.6 0 1 0 11.6 7M8 0.8L10.6 2.8L8 4.8" stroke={B} strokeWidth="1.2" />],
  ["caret", null],
  ["sep", null],
  ["Scene light", <path d="M9 2V12L1.5 7ZM10.5 4.5L12 3.5M10.5 7H12.5M10.5 9.5L12 10.5" fill={B} stroke={B} strokeWidth="0.8" />],
  ["Transparency", <><path d="M1.5 2.5H10.5V9.5H1.5Z" fill="#cfe0f2" stroke={B} /><path d="M4 5H12.5V12H4Z" fill="#b5d0ee" stroke={B} /></>],
  ["Show axes", pressed(<><rect x="2" y="2" width="10" height="10" fill="#e3edfa" /><path d="M7 9.5V3" stroke="#2f6fb5" strokeWidth="1.1" /><path d="M7 10L3 6.5" stroke="#3c9a3c" strokeWidth="1.2" /><path d="M7 10L11 7" stroke="#c03a4a" strokeWidth="1.2" /></>)],
  ["Show grid", pressed(<path d="M4.5 2.5V11.5M7 2.5V11.5M9.5 2.5V11.5M2.5 4.5H11.5M2.5 7H11.5M2.5 9.5H11.5" stroke="#2b579a" strokeWidth="0.8" />)],
  ["Show legend", pressed(<><rect x="2.5" y="2.5" width="4.5" height="9" fill="#f5f7fb" /><rect x="8.5" y="2.5" width="2.8" height="9" fill="#f0b040" /><rect x="8.5" y="2.5" width="2.8" height="4" fill="#d04a30" /></>)],
  ["Environment", <circle cx="7" cy="7" r="4.6" stroke={B} strokeWidth="2.4" strokeDasharray="3.6 1.2" />],
  ["caret", null],
  ["Image snapshot", <><path d="M1 4H4L5 2.5H9L10 4H13V12H1Z" fill={B} /><circle cx="7" cy="7.8" r="2.4" fill="none" stroke="#fff" strokeWidth="1.1" /></>],
  ["Print", <><path d="M3 1.5H11V5H3Z" fill="#fff" stroke={B} /><path d="M1 5.5H13V12H1Z" fill={B} /><path d="M3 9.5H11" stroke="#fff" /></>],
];

function Tab({ label, active, close }: { label: string; active?: boolean; close?: boolean }) {
  return (
    <button
      role="tab"
      aria-selected={!!active}
      className={
        active
          ? "-mb-px flex h-[18px] items-center border border-b-0 border-[#d5d8e2] bg-[#fafbff] px-[3px] text-[#2b579a]"
          : "flex h-[17px] items-center gap-[6px] bg-[#ececee] px-[3px] text-[#333]"
      }
    >
      {label}
      {close && <Svg size={7} vb={7}><path d="M0.8 0.8L6.2 6.2M6.2 0.8L0.8 6.2" stroke="#c8c8d0" /></Svg>}
    </button>
  );
}

function Graphics() {
  return (
    <section className="flex min-h-0 flex-1 flex-col border border-[#d5d8e2] bg-linear-to-b from-[#fcfcff] via-[#f4f8ff] to-[#e2f0ff]">
      <div className="flex h-[21px] shrink-0 items-end justify-between border-b border-[#dadde6] bg-[#fbfbff] pl-[2px] pr-1 font-['Open_Sans'] text-[9px]">
        <div role="tablist" className="flex items-end gap-[6px]">
          <Tab label="Graphics" active />
          <Tab label="Convergence Plot 1" close />
          <Tab label="Convergence Plot 2" close />
        </div>
        <div className="pb-1"><PanelTools color="#b8bbc8" /></div>
      </div>
      <div className="flex h-5 shrink-0 items-center gap-[3px] pl-[3px]">
        {gfx.map(([n, g], k) =>
          n === "caret" ? (
            <button key={k} aria-label="Options" className="flex w-[9px] justify-center"><Caret /></button>
          ) : n === "sep" ? (
            <span key={k} className="flex w-[3px] justify-center"><span className="h-3 w-px bg-[#c8ccd6]" /></span>
          ) : (
            <button key={k} aria-label={n}><Svg size={14} vb={14}>{g}</Svg></button>
          ),
        )}
      </div>
      <div className="min-h-0 flex-1"><Plot /></div>
    </section>
  );
}

function Progress() {
  return (
    <section className="flex h-[177px] shrink-0 flex-col border border-[#d5d8e2] bg-[#fafbff] pb-1">
      <div className="flex h-[21px] shrink-0 items-end justify-between border-b border-[#dadde6] pl-[2px] pr-1 font-['Open_Sans'] text-[9px]">
        <div role="tablist" className="flex items-end gap-[6px]">
          <Tab label="Progress" active />
          <Tab label="Log" />
          <Tab label="Participation Factors (Study 2)" close />
        </div>
        <div className="pb-1"><PanelTools color="#b8bbc8" /></div>
      </div>
      <div className="flex h-5 shrink-0 items-center gap-1 pl-[5px]">
        <button aria-label="Detach"><Svg><path d="M1 1.5H11M1 1.5V10.5H11M3.5 1.5V10.5M11 1.5V3.5M11 8.5V10.5" stroke="#777" /><path d="M5 6H11.6M7.4 3.8L5 6L7.4 8.2" stroke="#4b9a3c" strokeWidth="1.4" /></Svg></button>
        <button aria-label="Stop"><Svg><rect x="0.6" y="1.5" width="11" height="9" fill="#eee" stroke="#777" /><rect x="5.4" y="3.4" width="5" height="5.4" fill="#c0245f" /><path d="M2 5H4M2 7.5H4" stroke="#777" /></Svg></button>
        <button aria-label="Stop options"><Caret /></button>
        <button aria-label="Continue" className="ml-1"><Svg><path d="M0.4 6H4.6M5.5 2V10" stroke="#777" strokeWidth="1.2" /><path d="M6.5 6H11M8.8 3.6L11.2 6L8.8 8.4" stroke="#0b7fb0" strokeWidth="1.6" /></Svg></button>
        <button aria-label="Continue options"><Caret /></button>
      </div>
      <div className="mx-[3px] flex min-h-0 flex-1 border border-[#d0d3dc] bg-[#fcfcff]">
        <div className="flex-1" />
        <ScrollBar thumb={<><div className="flex-[58] bg-[#cdcdcd]" /><div className="flex-[46]" /></>} />
      </div>
    </section>
  );
}

/* ---------- taskbar ---------- */

function TaskBar() {
  const app = <><path d="M3 6L17 4L19 14L5 17Z" fill="#e9edf3" /><path d="M6 6L16 5L17 14L7 15Z" fill="#2f6fd0" /><path d="M8 8H12V14H8Z" fill="#e8e08a" /></>;
  const items: [string, ReactNode][] = [
    ["Search", <path d="M7 16A4 4 0 1 1 12.5 16" stroke="#ddd" strokeWidth="1.4" />],
    ["Task view", <path d="M6 8H14V18H6ZM3 10V17M17 10V17" stroke="#ddd" strokeWidth="1.3" />],
    ["Files", <><path d="M3 7H9L10.5 9H18V18H3Z" fill="#f3cf6a" /><path d="M3 11H18V18H3Z" fill="#fbe29a" /></>],
    ["Photos", <><path d="M3 8L15 6L17 16L5 18Z" fill="#dfe5ea" /><path d="M8 8L18 6V16H8Z" fill="#9fb4c4" /></>],
    ["Player", <><circle cx="10" cy="14" r="8" fill="#2f79c0" /><circle cx="10" cy="14" r="5.4" stroke="#fff" strokeWidth="1.3" /><path d="M8 10.5L12.5 14" stroke="#fff" strokeWidth="2" /></>],
    ["COMSOL", app],
    ["COMSOL viewer", app],
    ["System settings", <><circle cx="10" cy="12.5" r="4" stroke="#eee" strokeWidth="1.6" /><path d="M10 6.5V8M4 12.5H5.5M16 12.5H14.5M5.8 8.3L7 9.5M14.2 8.3L13 9.5" stroke="#eee" strokeWidth="2" /></>],
  ];
  return (
    <footer className="flex h-[15px] shrink-0 items-start justify-between overflow-hidden bg-black">
      <div className="flex">
        <span className="mt-[9px] h-2 w-[3px] bg-white" />
        <div className="flex pl-[13px]">
          {items.map(([n, g]) => (
            <button key={n} aria-label={n} className={`flex h-5 w-[35px] justify-center pt-px ${n === "COMSOL" ? "bg-[#333]" : ""}`}>
              <Svg size={20} vb={20}>{g}</Svg>
            </button>
          ))}
        </div>
      </div>
      <div className="flex items-start gap-[5px] pr-[15px] pt-[3px] text-[9px] leading-[10px] text-white">
        <Svg><path d="M2 11L6 7L10 11" stroke="#eee" strokeWidth="1.2" /></Svg>
        <Svg><path d="M1 5H11V12H1ZM1 4V12" stroke="#eee" /></Svg>
        <Svg><path d="M1 7H3L6 4V12M8 6Q9.5 8 8 11M10 4.5Q12.5 8 10 12" stroke="#eee" /></Svg>
        <span className="px-1">8:58 AM</span>
        <span className="ml-2"><Svg><path d="M1 6H11V12" stroke="#eee" /><path d="M1 6V12" stroke="#eee" /></Svg></span>
      </div>
    </footer>
  );
}

export default function App() {
  return (
    <div className="flex h-screen flex-col overflow-hidden bg-black font-['Roboto','Noto_Sans',sans-serif] text-[#222]">
      <div className="h-[6px] shrink-0 bg-[#1a1a1c]" />
      <div className="flex min-h-0 flex-1 pr-[77px]">
        <div className="relative flex min-w-0 flex-1 flex-col border-r-2 border-t-2 border-[#e0201c] bg-[#fcfcff]">
          <RemoteBar />
          <TitleBar />
          <MenuBar />
          <Ribbon />
          <main className="flex min-h-0 flex-1 gap-[3px] pb-[3px] pt-[3px]">
            <ModelBuilder />
            <Settings />
            <div className="flex min-w-0 flex-1 flex-col gap-1">
              <Graphics />
              <Progress />
            </div>
          </main>
          <div className="flex h-[19px] shrink-0 items-center bg-[#f1eded] pt-[3px] text-[9px]">
            <span className="ml-auto mr-[425px]">2.48 GB | 2.57 GB</span>
          </div>
          <TaskBar />
          <svg width="10" height="14" viewBox="0 0 10 14" className="pointer-events-none absolute left-[443px] top-[126px]" aria-hidden="true">
            <path d="M1 1V11.5L3.6 9.2L5.4 13L7.2 12.2L5.5 8.5H9Z" fill="#fff" stroke="#222" strokeWidth="0.9" />
          </svg>
        </div>
      </div>
    </div>
  );
}
